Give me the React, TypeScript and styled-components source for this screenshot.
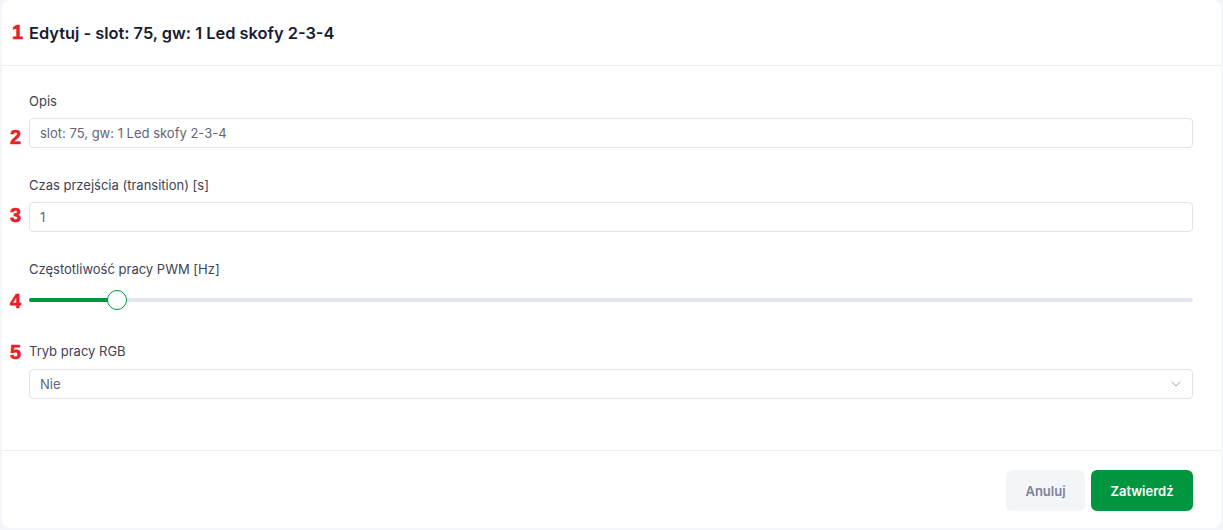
import React from "react";
import styled, { createGlobalStyle } from "styled-components";

const Global = createGlobalStyle`
  html, body { margin: 0; padding: 0; background: #f3f6fa; }
  body { font-family: Inter, "Noto Sans", sans-serif; }
  * { box-sizing: border-box; }
`;

const Page = styled.div`
  padding: 0 2px 2px 2px;
  width: 1223px;
`;

const Card = styled.div`
  background: #ffffff;
  border-radius: 8px;
  width: 1219px;
  height: 528px;
  display: flex;
  flex-direction: column;
`;

const Header = styled.div`
  height: 66px;
  border-bottom: 1px solid #eceef3;
  padding: 0 28px 0 27px;
  display: flex;
  align-items: center;
  position: relative;
`;

const Title = styled.h2`
  margin: 0;
  font-size: 16.4px;
  font-weight: 600;
  color: #181c32;
`;

const Body = styled.div`
  flex: 1;
  padding: 26px 28px 0 27px;
  display: flex;
  flex-direction: column;
  gap: 28px;
  border-bottom: 1px solid #eceef3;
`;

const Field = styled.div`
  display: flex;
  flex-direction: column;
  gap: 8px;
`;

const Label = styled.label`
  font-size: 13px;
  line-height: 18px;
  color: #3f4254;
  position: relative;
`;

const Anchor = styled.div`
  position: relative;
`;

const Marker = styled.span<{ $top: number; $left?: number }>`
  position: absolute;
  left: ${(p) => (p.$left ?? -19)}px;
  top: ${(p) => p.$top}px;
  font-family: "Liberation Sans", Arial, sans-serif;
  font-weight: 700;
  font-size: 20px;
  line-height: 20px;
  color: #e8202a;
  -webkit-text-stroke: 0.6px #e8202a;
`;

const Input = styled.div`
  height: 30px;
  border: 1px solid #e1e3ea;
  border-radius: 4px;
  padding: 0 10px;
  display: flex;
  align-items: center;
  font-size: 13px;
  color: #636677;
`;

const Select = styled(Input)`
  justify-content: space-between;
  margin-top: 1px;
`;

const SliderBox = styled.div`
  height: 28px;
  display: flex;
  align-items: center;
  position: relative;
`;

const Track = styled.div`
  flex: 1;
  height: 4px;
  border-radius: 2px;
  background: #e4e6ef;
  position: relative;
`;

const Fill = styled.div`
  position: absolute;
  left: 0;
  top: 0;
  bottom: 0;
  border-radius: 2px;
  background: #00963f;
`;

const Thumb = styled.div`
  position: absolute;
  top: 50%;
  width: 20px;
  height: 20px;
  margin-left: -10px;
  margin-top: -10px;
  border-radius: 50%;
  background: #fff;
  border: 1px solid #00963f;
`;

const Footer = styled.div`
  height: 77px;
  padding: 19px 28px 18px;
  display: flex;
  justify-content: flex-end;
  align-items: flex-start;
  gap: 6px;
`;

const Button = styled.button<{ $primary?: boolean }>`
  height: 41px;
  border: none;
  border-radius: 6px;
  font-family: Inter, sans-serif;
  font-size: 13px;
  font-weight: 600;
  padding: 0;
  cursor: pointer;
  background: ${(p) => (p.$primary ? "#00963f" : "#f3f6f9")};
  color: ${(p) => (p.$primary ? "#ffffff" : "#7e8299")};
  width: ${(p) => (p.$primary ? "102px" : "79px")};
`;

const pct = 7.6;

export default function App() {
  return (
    <Page>
      <Global />
      <Card>
        <Header>
          <Marker $top={22} $left={10}>1</Marker>
          <Title>Edytuj - slot: 75, gw: 1 Led skofy 2-3-4</Title>
        </Header>
        <Body>
          <Field>
            <Label>Opis</Label>
            <Anchor>
              <Marker $top={9}>2</Marker>
              <Input>slot: 75, gw: 1 Led skofy 2-3-4</Input>
            </Anchor>
          </Field>
          <Field>
            <Label>Czas przejścia (transition) [s]</Label>
            <Anchor>
              <Marker $top={3}>3</Marker>
              <Input>1</Input>
            </Anchor>
          </Field>
          <Field>
            <Label>Częstotliwość pracy PWM [Hz]</Label>
            <Anchor>
              <Marker $top={5}>4</Marker>
              <SliderBox>
                <Track>
                  <Fill style={{ width: `${pct}%` }} />
                  <Thumb style={{ left: `${pct}%` }} />
                </Track>
              </SliderBox>
            </Anchor>
          </Field>
          <Field>
            <Label>
              <Marker $top={0}>5</Marker>
              Tryb pracy RGB
            </Label>
            <Select>
              <span>Nie</span>
              <svg width="12" height="8" viewBox="0 0 12 8" fill="none">
                <path d="M1.5 1.8 L6 6 L10.5 1.8" stroke="#a1a5b7" strokeWidth="1" />
              </svg>
            </Select>
          </Field>
        </Body>
        <Footer>
          <Button>Anuluj</Button>
          <Button $primary>Zatwierdź</Button>
        </Footer>
      </Card>
    </Page>
  );
}
